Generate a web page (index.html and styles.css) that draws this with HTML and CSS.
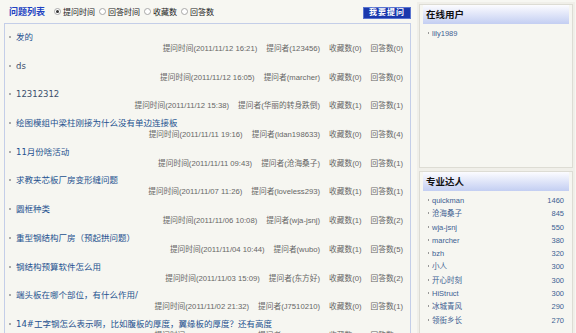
FILE: index.html
```
<!DOCTYPE HTML>
<html>
<head>
<meta charset="UTF-8">
<title>问题列表</title>
<link rel="stylesheet" href="styles.css">
</head>
<body>
<div id="wrapper">
	<div id="main">
		<div class="bar">
			<h2 class="bar-title">问题列表</h2>
			<div class="sort">
				<label class="opt"><span class="radio on"></span>提问时间</label>
				<label class="opt"><span class="radio"></span>回答时间</label>
				<label class="opt"><span class="radio"></span>收藏数</label>
				<label class="opt"><span class="radio"></span>回答数</label>
			</div>
			<a class="ask-btn" href="#">我要提问</a>
		</div><!-- end of bar -->

		<ul class="qlist">
			<li class="q"><a class="q-title" href="#">发的</a>
				<div class="q-meta"><span>提问时间(2011/11/12 16:21)</span><span>提问者(123456)</span><span>收藏数(0)</span><span>回答数(0)</span></div></li>
			<li class="q"><a class="q-title dark" href="#">ds</a>
				<div class="q-meta"><span>提问时间(2011/11/12 16:05)</span><span>提问者(marcher)</span><span>收藏数(0)</span><span>回答数(0)</span></div></li>
			<li class="q"><a class="q-title dark" href="#">12312312</a>
				<div class="q-meta"><span>提问时间(2011/11/12 15:38)</span><span>提问者(华丽的转身跌倒)</span><span>收藏数(1)</span><span>回答数(1)</span></div></li>
			<li class="q"><a class="q-title" href="#">绘图模组中梁柱刚接为什么没有单边连接板</a>
				<div class="q-meta"><span>提问时间(2011/11/11 19:16)</span><span>提问者(ldan198633)</span><span>收藏数(0)</span><span>回答数(4)</span></div></li>
			<li class="q"><a class="q-title" href="#">11月份啥活动</a>
				<div class="q-meta"><span>提问时间(2011/11/11 09:43)</span><span>提问者(沧海桑子)</span><span>收藏数(0)</span><span>回答数(1)</span></div></li>
			<li class="q"><a class="q-title" href="#">求教夹芯板厂房变形缝问题</a>
				<div class="q-meta"><span>提问时间(2011/11/07 11:26)</span><span>提问者(loveless293)</span><span>收藏数(1)</span><span>回答数(1)</span></div></li>
			<li class="q"><a class="q-title" href="#">圆框种类</a>
				<div class="q-meta"><span>提问时间(2011/11/06 10:08)</span><span>提问者(wja-jsnj)</span><span>收藏数(1)</span><span>回答数(2)</span></div></li>
			<li class="q"><a class="q-title" href="#">重型钢结构厂房（预起拱问题）</a>
				<div class="q-meta"><span>提问时间(2011/11/04 10:44)</span><span>提问者(wubo)</span><span>收藏数(1)</span><span>回答数(5)</span></div></li>
			<li class="q"><a class="q-title" href="#">钢结构预算软件怎么用</a>
				<div class="q-meta"><span>提问时间(2011/11/03 15:09)</span><span>提问者(东方好)</span><span>收藏数(0)</span><span>回答数(2)</span></div></li>
			<li class="q"><a class="q-title" href="#">端头板在哪个部位，有什么作用/</a>
				<div class="q-meta"><span>提问时间(2011/11/02 21:32)</span><span>提问者(J7510210)</span><span>收藏数(0)</span><span>回答数(1)</span></div></li>
			<li class="q"><a class="q-title" href="#">14#工字钢怎么表示啊，比如腹板的厚度，翼缘板的厚度？还有高度</a>
				<div class="q-meta"><span>提问时间(2011/11/02 08:45)</span><span>提问者(J7510210)</span><span>收藏数(0)</span><span>回答数(0)</span></div></li>
		</ul>
	</div><!-- end of main -->

	<div id="side">
		<div class="box online">
			<h3 class="box-head">在线用户</h3>
			<ul class="ulist">
				<li><a href="#">lily1989</a></li>
			</ul>
		</div>
		<div class="box experts">
			<h3 class="box-head">专业达人</h3>
			<ul class="ulist">
				<li><a href="#">quickman</a><span>1460</span></li>
				<li><a href="#">沧海桑子</a><span>845</span></li>
				<li><a href="#">wja-jsnj</a><span>550</span></li>
				<li><a href="#">marcher</a><span>380</span></li>
				<li><a href="#">bzh</a><span>320</span></li>
				<li><a href="#">小人</a><span>300</span></li>
				<li><a href="#">开心时刻</a><span>300</span></li>
				<li><a href="#">HiStruct</a><span>300</span></li>
				<li><a href="#">冰城青风</a><span>290</span></li>
				<li><a href="#">领街乡长</a><span>270</span></li>
			</ul>
		</div>
	</div><!-- end of side -->
</div><!-- end of wrapper -->
</body>
</html>
```

FILE: styles.css
```
body{
	margin:0;
	padding:0;
	background:#f7f7f2;
	font-family:"Liberation Sans", "Noto Sans CJK SC", sans-serif;
	color:#333;
	overflow:hidden;
}
ul{
	list-style:none;
	margin:0;
	padding:0;
}
a{
	text-decoration:none;
}
#wrapper{
	display:flex;
	align-items:flex-start;
	height:333px;
}
#main{
	width:407px;
	margin-left:4px;
}
.bar{
	display:flex;
	align-items:center;
	height:23px;
}
.bar-title{
	margin:0 0 0 5px;
	font-size:9px;
	font-weight:bold;
	color:#2142c2;
}
.sort{
	display:flex;
	margin-left:9px;
	font-size:8px;
	color:#222;
}
.opt{
	display:flex;
	align-items:center;
	margin-right:4px;
}
.radio{
	width:5px;
	height:5px;
	border:1px solid #a8a8a8;
	border-radius:50%;
	background:#fff;
	margin-right:2px;
	position:relative;
}
.radio.on::after{
	content:"";
	position:absolute;
	left:1px;
	top:1px;
	width:3px;
	height:3px;
	border-radius:50%;
	background:#333;
}
.ask-btn{
	margin-left:auto;
	margin-top:3px;
	width:46px;
	height:10px;
	line-height:10px;
	text-align:center;
	background:#1b39ad;
	border:1px solid #5a74d0;
	color:#fff;
	font-size:8px;
	font-weight:bold;
	letter-spacing:1px;
}
.qlist{
	border:1px solid #c4cee8;
	border-bottom:none;
	background:#f6f6f1;
	padding:7px 0 0 0;
	height:320px;
}
.q{
	height:28.7px;
	position:relative;
}
.q-title{
	display:block;
	padding-left:11px;
	line-height:12px;
	height:12px;
	font-family:"DejaVu Sans", "Noto Sans CJK SC", sans-serif;
	font-size:8.5px;
	color:#24518f;
	white-space:nowrap;
}
.q-title.dark{
	color:#3b4f6c;
}
.q-title::before{
	content:"";
	position:absolute;
	left:4px;
	top:5px;
	width:2px;
	height:2px;
	background:#aaa;
}
.q-meta{
	display:flex;
	justify-content:flex-end;
	gap:9px;
	padding-right:7px;
	line-height:12px;
	font-size:7.7px;
	color:#666;
	white-space:nowrap;
}
#side{
	width:154px;
	margin-left:8px;
	margin-top:4px;
}
.box{
	border:1px solid #dddcd4;
	outline:2px solid #f0efe9;
	background:#f6f6f1;
	padding:0 3px;
}
.online{
	height:162px;
}
.experts{
	margin-top:3px;
	height:170px;
}
.box-head{
	margin:0;
	height:19px;
	line-height:20px;
	padding-left:3px;
	font-size:9.5px;
	font-weight:bold;
	color:#111;
	background:linear-gradient(#fcfcff, #c3cef2);
}
.ulist{
	padding:3px 5px 0 9px;
}
.experts .ulist{
	padding-top:3px;
}
.ulist li{
	display:flex;
	justify-content:space-between;
	line-height:13.3px;
	font-size:7.5px;
	position:relative;
}
.ulist li::before{
	content:"";
	position:absolute;
	left:-4px;
	top:5px;
	width:1px;
	height:2px;
	background:#999;
}
.ulist a,
.ulist span{
	color:#3d5f92;
}
```
